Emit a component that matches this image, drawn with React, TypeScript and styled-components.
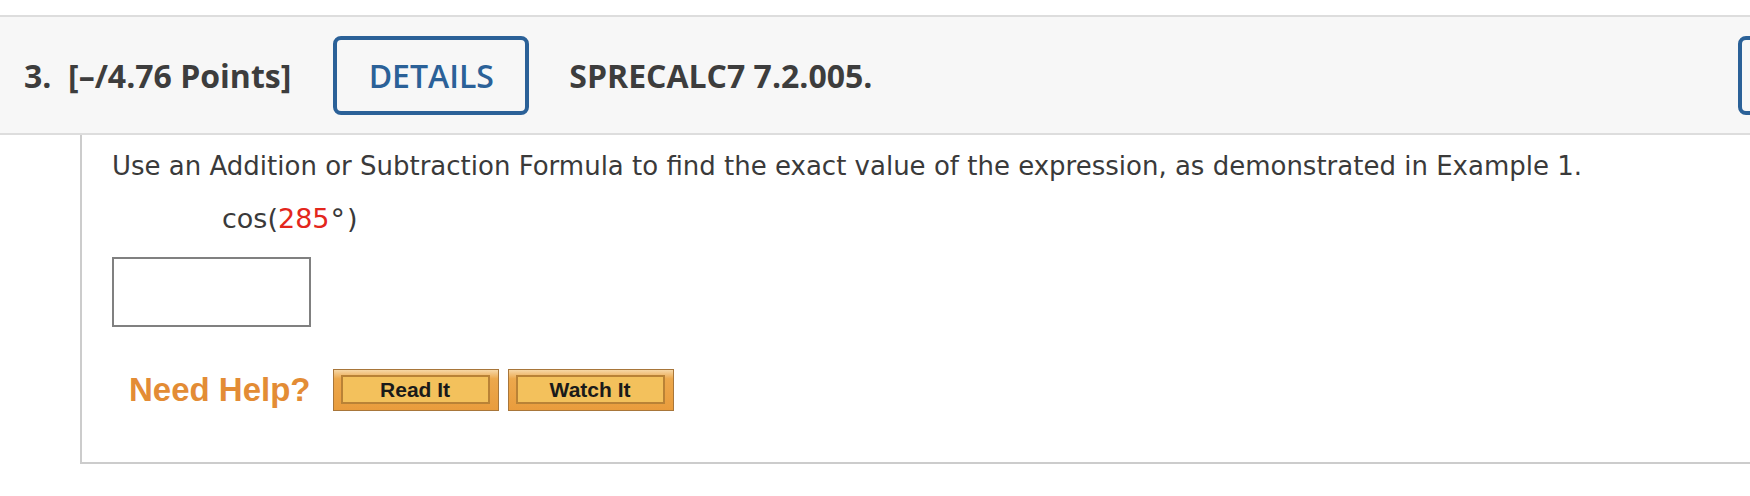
import React from "react";
import styled, { createGlobalStyle } from "styled-components";

const Global = createGlobalStyle`
  html, body { margin: 0; padding: 0; background: #ffffff; overflow: hidden; }
  * { box-sizing: border-box; }
`;

const Page = styled.div`
  width: 1750px;
  height: 496px;
  padding-top: 15px;
  overflow: hidden;
`;

const Header = styled.div`
  display: flex;
  align-items: center;
  height: 120px;
  padding-left: 24px;
  background: #f7f7f7;
  border-top: 2px solid #dddddd;
  border-bottom: 2px solid #dddddd;
  overflow: hidden;
  font-family: "Open Sans", "DejaVu Sans", sans-serif;
  font-size: 32px;
  color: #3d3d3d;
`;

const Points = styled.span`
  font-weight: 700;
  white-space: nowrap;
`;

const Code = styled.span`
  font-weight: 700;
  white-space: nowrap;
  margin-left: 40px;
`;

const OutlineButton = styled.button<{ $edge?: boolean }>`
  flex-shrink: 0;
  width: 196px;
  height: 79px;
  margin-left: ${(p) => (p.$edge ? "auto" : "42px")};
  margin-right: ${(p) => (p.$edge ? "-184px" : "0")};
  border: 4px solid #2b6198;
  border-radius: 8px;
  background: transparent;
  color: #2b6198;
  font-family: "Open Sans", "DejaVu Sans", sans-serif;
  font-size: 32px;
  font-weight: 600;
  padding: 0;
  cursor: pointer;
`;

const Body = styled.div`
  margin-left: 80px;
  border-left: 2px solid #cccccc;
  border-bottom: 2px solid #cccccc;
  padding: 16px 0 51px 30px;
  font-family: "DejaVu Sans", Verdana, sans-serif;
  font-size: 26px;
  color: #3a3a3a;
`;

const Question = styled.div`
  line-height: 30px;
  white-space: nowrap;
`;

const Expression = styled.div`
  margin: 23px 0 0 110px;
  line-height: 30px;
  font-size: 27px;
  white-space: nowrap;
`;

const Red = styled.span`
  color: #e3261c;
`;

const Degree = styled.span`
  font-size: 29px;
  vertical-align: -1px;
  margin: 0 2px 0 1px;
`;

const Answer = styled.input`
  display: block;
  margin-top: 23px;
  width: 199px;
  height: 70px;
  border: 2px solid #808080;
  background: #ffffff;
  outline: none;
`;

const HelpRow = styled.div`
  display: flex;
  align-items: center;
  margin-top: 42px;
  height: 42px;
`;

const HelpLabel = styled.span`
  margin-left: 17px;
  margin-right: 22px;
  font-family: "Liberation Sans", Arial, sans-serif;
  font-weight: 700;
  font-size: 33px;
  color: #e38c35;
  white-space: nowrap;
`;

const HelpButton = styled.button`
  display: flex;
  width: 166px;
  height: 42px;
  margin-right: 9px;
  padding: 5px 8px 6px 7px;
  border: 1px solid #a8763a;
  background: linear-gradient(#f6d7a6 0%, #eca84c 22%, #e99c3d 100%);
  cursor: pointer;
`;

const HelpInner = styled.span`
  flex: 1;
  display: flex;
  align-items: center;
  justify-content: center;
  border: 2px solid #b98236;
  background: #f3c15c;
  font-family: "Liberation Sans", Arial, sans-serif;
  font-weight: 700;
  font-size: 21px;
  color: #1a1a1a;
`;

export default function App() {
  return (
    <Page>
      <Global />
      <Header>
        <Points>3.&nbsp; [–/4.76 Points]</Points>
        <OutlineButton>DETAILS</OutlineButton>
        <Code>SPRECALC7 7.2.005.</Code>
        <OutlineButton $edge aria-label="My Notes" />
      </Header>
      <Body>
        <Question>
          Use an Addition or Subtraction Formula to find the exact value of the expression, as demonstrated in Example 1.
        </Question>
        <Expression>
          cos(<Red>285</Red><Degree>°</Degree>)
        </Expression>
        <Answer type="text" />
        <HelpRow>
          <HelpLabel>Need Help?</HelpLabel>
          <HelpButton>
            <HelpInner>Read It</HelpInner>
          </HelpButton>
          <HelpButton>
            <HelpInner>Watch It</HelpInner>
          </HelpButton>
        </HelpRow>
      </Body>
    </Page>
  );
}
